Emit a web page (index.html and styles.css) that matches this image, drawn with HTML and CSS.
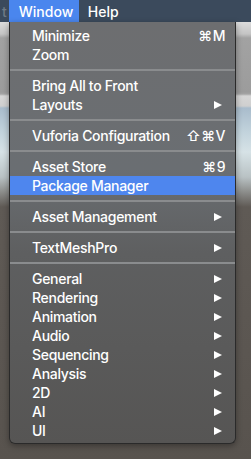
FILE: index.html
```html
<!DOCTYPE html>
<html>
<head>
<meta charset="utf-8">
<link rel="stylesheet" href="styles.css">
</head>
<body>
<div class="menubar">
  <span class="bar-item cut">t</span>
  <span class="bar-item active">Window</span>
  <span class="bar-item">Help</span>
</div>
<div class="scene"></div>
<div class="menu">
  <div class="item"><span>Minimize</span><span class="key">⌘M</span></div>
  <div class="item"><span>Zoom</span></div>
  <div class="sep"></div>
  <div class="item"><span>Bring All to Front</span></div>
  <div class="item"><span>Layouts</span><span class="arrow"></span></div>
  <div class="sep"></div>
  <div class="item"><span>Vuforia Configuration</span><span class="key">⇧⌘V</span></div>
  <div class="sep"></div>
  <div class="item"><span>Asset Store</span><span class="key">⌘9</span></div>
  <div class="item selected"><span>Package Manager</span></div>
  <div class="sep"></div>
  <div class="item"><span>Asset Management</span><span class="arrow"></span></div>
  <div class="sep"></div>
  <div class="item"><span>TextMeshPro</span><span class="arrow"></span></div>
  <div class="sep"></div>
  <div class="item"><span>General</span><span class="arrow"></span></div>
  <div class="item"><span>Rendering</span><span class="arrow"></span></div>
  <div class="item"><span>Animation</span><span class="arrow"></span></div>
  <div class="item"><span>Audio</span><span class="arrow"></span></div>
  <div class="item"><span>Sequencing</span><span class="arrow"></span></div>
  <div class="item"><span>Analysis</span><span class="arrow"></span></div>
  <div class="item"><span>2D</span><span class="arrow"></span></div>
  <div class="item"><span>AI</span><span class="arrow"></span></div>
  <div class="item"><span>UI</span><span class="arrow"></span></div>
</div>
</body>
</html>
```

FILE: styles.css
```css
html, body {
  margin: 0;
  padding: 0;
  width: 251px;
  height: 459px;
  overflow: hidden;
  font-family: Inter, "Liberation Sans", sans-serif;
}

body {
  position: relative;
  background: #57524d;
}

.menubar {
  height: 22px;
  background: #3b4a5c;
  display: flex;
  align-items: stretch;
  color: #fff;
  font-size: 14px;
  font-weight: 500;
}

.bar-item {
  display: flex;
  align-items: center;
  padding: 0 9px 0 9px;
}

.bar-item.cut {
  margin-left: -7px;
  padding-right: 2px;
  color: #6f7a86;
}

.bar-item.active {
  background: #4a86ee;
  width: 52px;
  padding-left: 10px;
  padding-right: 8px;
}

.scene {
  height: 437px;
  background: linear-gradient(to bottom,
    #dcdcdc 0px, #c4c4c4 12px, #a2a2a2 16px, #9c9c9c 70px,
    #a4a4a4 72px, #d6d6d6 74px, #cfcfcf 84px, #a9bccc 86px,
    #c2d3dc 110px, #d6e2e6 130px, #b9c2c4 155px, #8c8d8b 170px,
    #5f5a55 185px, #58534e 437px);
}

.menu {
  position: absolute;
  left: 9px;
  top: 22px;
  width: 225px;
  padding: 4px 0 3px;
  background: linear-gradient(to bottom, #6d6e70 0%, #6a6e72 35%, #5e5f60 55%, #565554 100%);
  border: 1px solid #2a2a2a;
  border-top: none;
  border-radius: 0 0 6px 6px;
  color: #fff;
  font-size: 14px;
  font-weight: 500;
  letter-spacing: -0.3px;
  box-shadow: 0 2px 6px rgba(0,0,0,0.35);
}

.item {
  height: 19px;
  display: flex;
  align-items: center;
  justify-content: space-between;
  padding: 0 9px 0 22px;
  white-space: nowrap;
}

.item.selected {
  background: #4e86ee;
}

.key {
  font-size: 14px;
  letter-spacing: 0.5px;
}

.arrow {
  width: 0;
  height: 0;
  border-top: 4.5px solid transparent;
  border-bottom: 4.5px solid transparent;
  border-left: 8px solid #fff;
  margin-right: 4px;
}

.sep {
  height: 2px;
  margin: 5px 0;
  background: #8a8c8e;
}
```
